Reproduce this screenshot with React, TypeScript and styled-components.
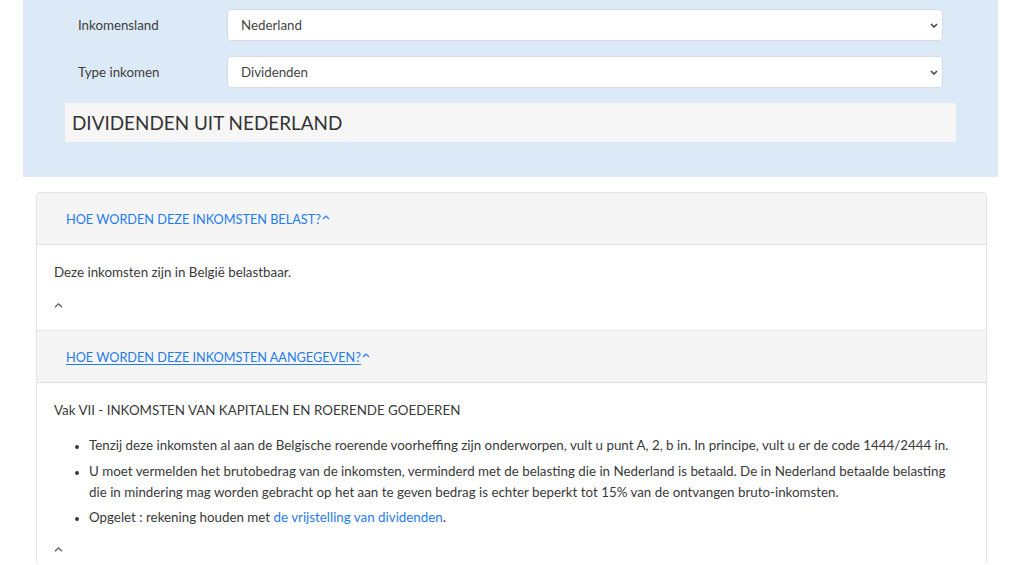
import React from "react";
import styled, { createGlobalStyle } from "styled-components";

const Global = createGlobalStyle`
  body {
    margin: 0;
    background: #ffffff;
    font-family: "Lato", "Open Sans", sans-serif;
    color: #3a3a3a;
  }
`;

const Page = styled.div`
  width: 1024px;
  padding: 0 26px 0 23px;
  box-sizing: border-box;
`;

const FilterPanel = styled.section`
  background: #dceaf7;
  height: 177px;
  box-sizing: border-box;
  padding: 9px 0 0 42px;
`;

const FormRow = styled.div`
  display: flex;
  align-items: center;
  height: 32px;
  margin-bottom: 15px;
`;

const Label = styled.label`
  width: 149px;
  padding-left: 13px;
  font-size: 13.3px;
  color: #3c3c3c;
`;

const SelectWrap = styled.div`
  position: relative;
  width: 716px;
  height: 32px;
`;

const Select = styled.select`
  appearance: none;
  width: 100%;
  height: 100%;
  border: 1px solid #d4dbe3;
  border-radius: 4px;
  background: #ffffff;
  padding: 0 13px;
  font-family: inherit;
  font-size: 13.3px;
  color: #444;
  box-sizing: border-box;
`;

const Chevron = styled.svg`
  position: absolute;
  right: 5px;
  top: 14px;
  pointer-events: none;
`;

const Heading = styled.h2`
  margin: 0;
  width: 891px;
  height: 39px;
  background: #f6f6f6;
  display: flex;
  align-items: center;
  padding-left: 7px;
  box-sizing: border-box;
  font-weight: 400;
  font-size: 18.9px;
  color: #333;
`;

const Card = styled.div`
  margin: 15px 0 0 13px;
  width: 949px;
  border: 1px solid #e3e3e3;
  border-radius: 4px;
  border-bottom: none;
`;

const CardHeader = styled.div`
  background: #f5f5f5;
  height: 51px;
  display: flex;
  align-items: center;
  padding-left: 29px;
  border-bottom: 1px solid #dedede;
  font-size: 12.7px;
`;

const HeaderLink = styled.a<{ $underline?: boolean }>`
  color: #1f7cf0;
  text-decoration: ${(p) => (p.$underline ? "underline" : "none")};
  text-underline-offset: 2px;
  cursor: pointer;
`;

const HeaderCaret = styled.svg`
  margin-left: 1px;
  margin-top: -3px;
`;

const CardBody = styled.div<{ $last?: boolean }>`
  padding: 17px 17px ${(p) => (p.$last ? "12px" : "22px")} 17px;
  border-bottom: ${(p) => (p.$last ? "none" : "1px solid #e6e6e6")};
  font-size: 13.35px;
  line-height: 21px;
  color: #3a3a3a;
`;

const Para = styled.p<{ $gap: number }>`
  margin: 0 0 ${(p) => p.$gap}px;
`;

const List = styled.ul`
  margin: 0 0 19px;
  padding: 0 12px 0 35px;
  li {
    margin-bottom: 4.5px;
  }
  li::marker {
    font-size: 11px;
  }
`;

const Link = styled.a`
  color: #1f7cf0;
  text-decoration: none;
`;

const UpCaret = styled.svg`
  display: block;
`;

const ChevronIcon = () => (
  <Chevron width="8" height="5" viewBox="0 0 8 5">
    <path d="M1 1l3 3 3-3" stroke="#444" strokeWidth="1.6" fill="none" />
  </Chevron>
);

const BlueCaret = () => (
  <HeaderCaret width="8" height="5" viewBox="0 0 8 5">
    <path d="M1 4l3-3 3 3" stroke="#1f7cf0" strokeWidth="1.2" fill="none" />
  </HeaderCaret>
);

const GreyCaret = () => (
  <UpCaret width="9" height="5" viewBox="0 0 9 5">
    <path d="M1 4.2l3.5-3.3 3.5 3.3" stroke="#555" strokeWidth="1.2" fill="none" />
  </UpCaret>
);

export default function App() {
  return (
    <Page>
      <Global />
      <FilterPanel>
        <FormRow>
          <Label>Inkomensland</Label>
          <SelectWrap>
            <Select defaultValue="nl">
              <option value="nl">Nederland</option>
            </Select>
            <ChevronIcon />
          </SelectWrap>
        </FormRow>
        <FormRow>
          <Label>Type inkomen</Label>
          <SelectWrap>
            <Select defaultValue="div">
              <option value="div">Dividenden</option>
            </Select>
            <ChevronIcon />
          </SelectWrap>
        </FormRow>
        <Heading>DIVIDENDEN UIT NEDERLAND</Heading>
      </FilterPanel>
      <Card>
        <CardHeader>
          <HeaderLink>HOE WORDEN DEZE INKOMSTEN BELAST?</HeaderLink>
          <BlueCaret />
        </CardHeader>
        <CardBody>
          <Para $gap={20}>Deze inkomsten zijn in België belastbaar.</Para>
          <GreyCaret />
        </CardBody>
        <CardHeader>
          <HeaderLink $underline>HOE WORDEN DEZE INKOMSTEN AANGEGEVEN?</HeaderLink>
          <BlueCaret />
        </CardHeader>
        <CardBody $last>
          <Para $gap={14}>Vak VII - INKOMSTEN VAN KAPITALEN EN ROERENDE GOEDEREN</Para>
          <List>
            <li>
              Tenzij deze inkomsten al aan de Belgische roerende voorheffing zijn onderworpen, vult u punt A, 2, b in. In principe, vult u er de code 1444/2444 in.
            </li>
            <li>
              U moet vermelden het brutobedrag van de inkomsten, verminderd met de belasting die in Nederland is betaald. De in Nederland betaalde belasting die in mindering mag worden gebracht op het aan te geven bedrag is echter beperkt tot 15% van de ontvangen bruto-inkomsten.
            </li>
            <li>
              Opgelet : rekening houden met <Link>de vrijstelling van dividenden</Link>.
            </li>
          </List>
          <GreyCaret />
        </CardBody>
      </Card>
    </Page>
  );
}
